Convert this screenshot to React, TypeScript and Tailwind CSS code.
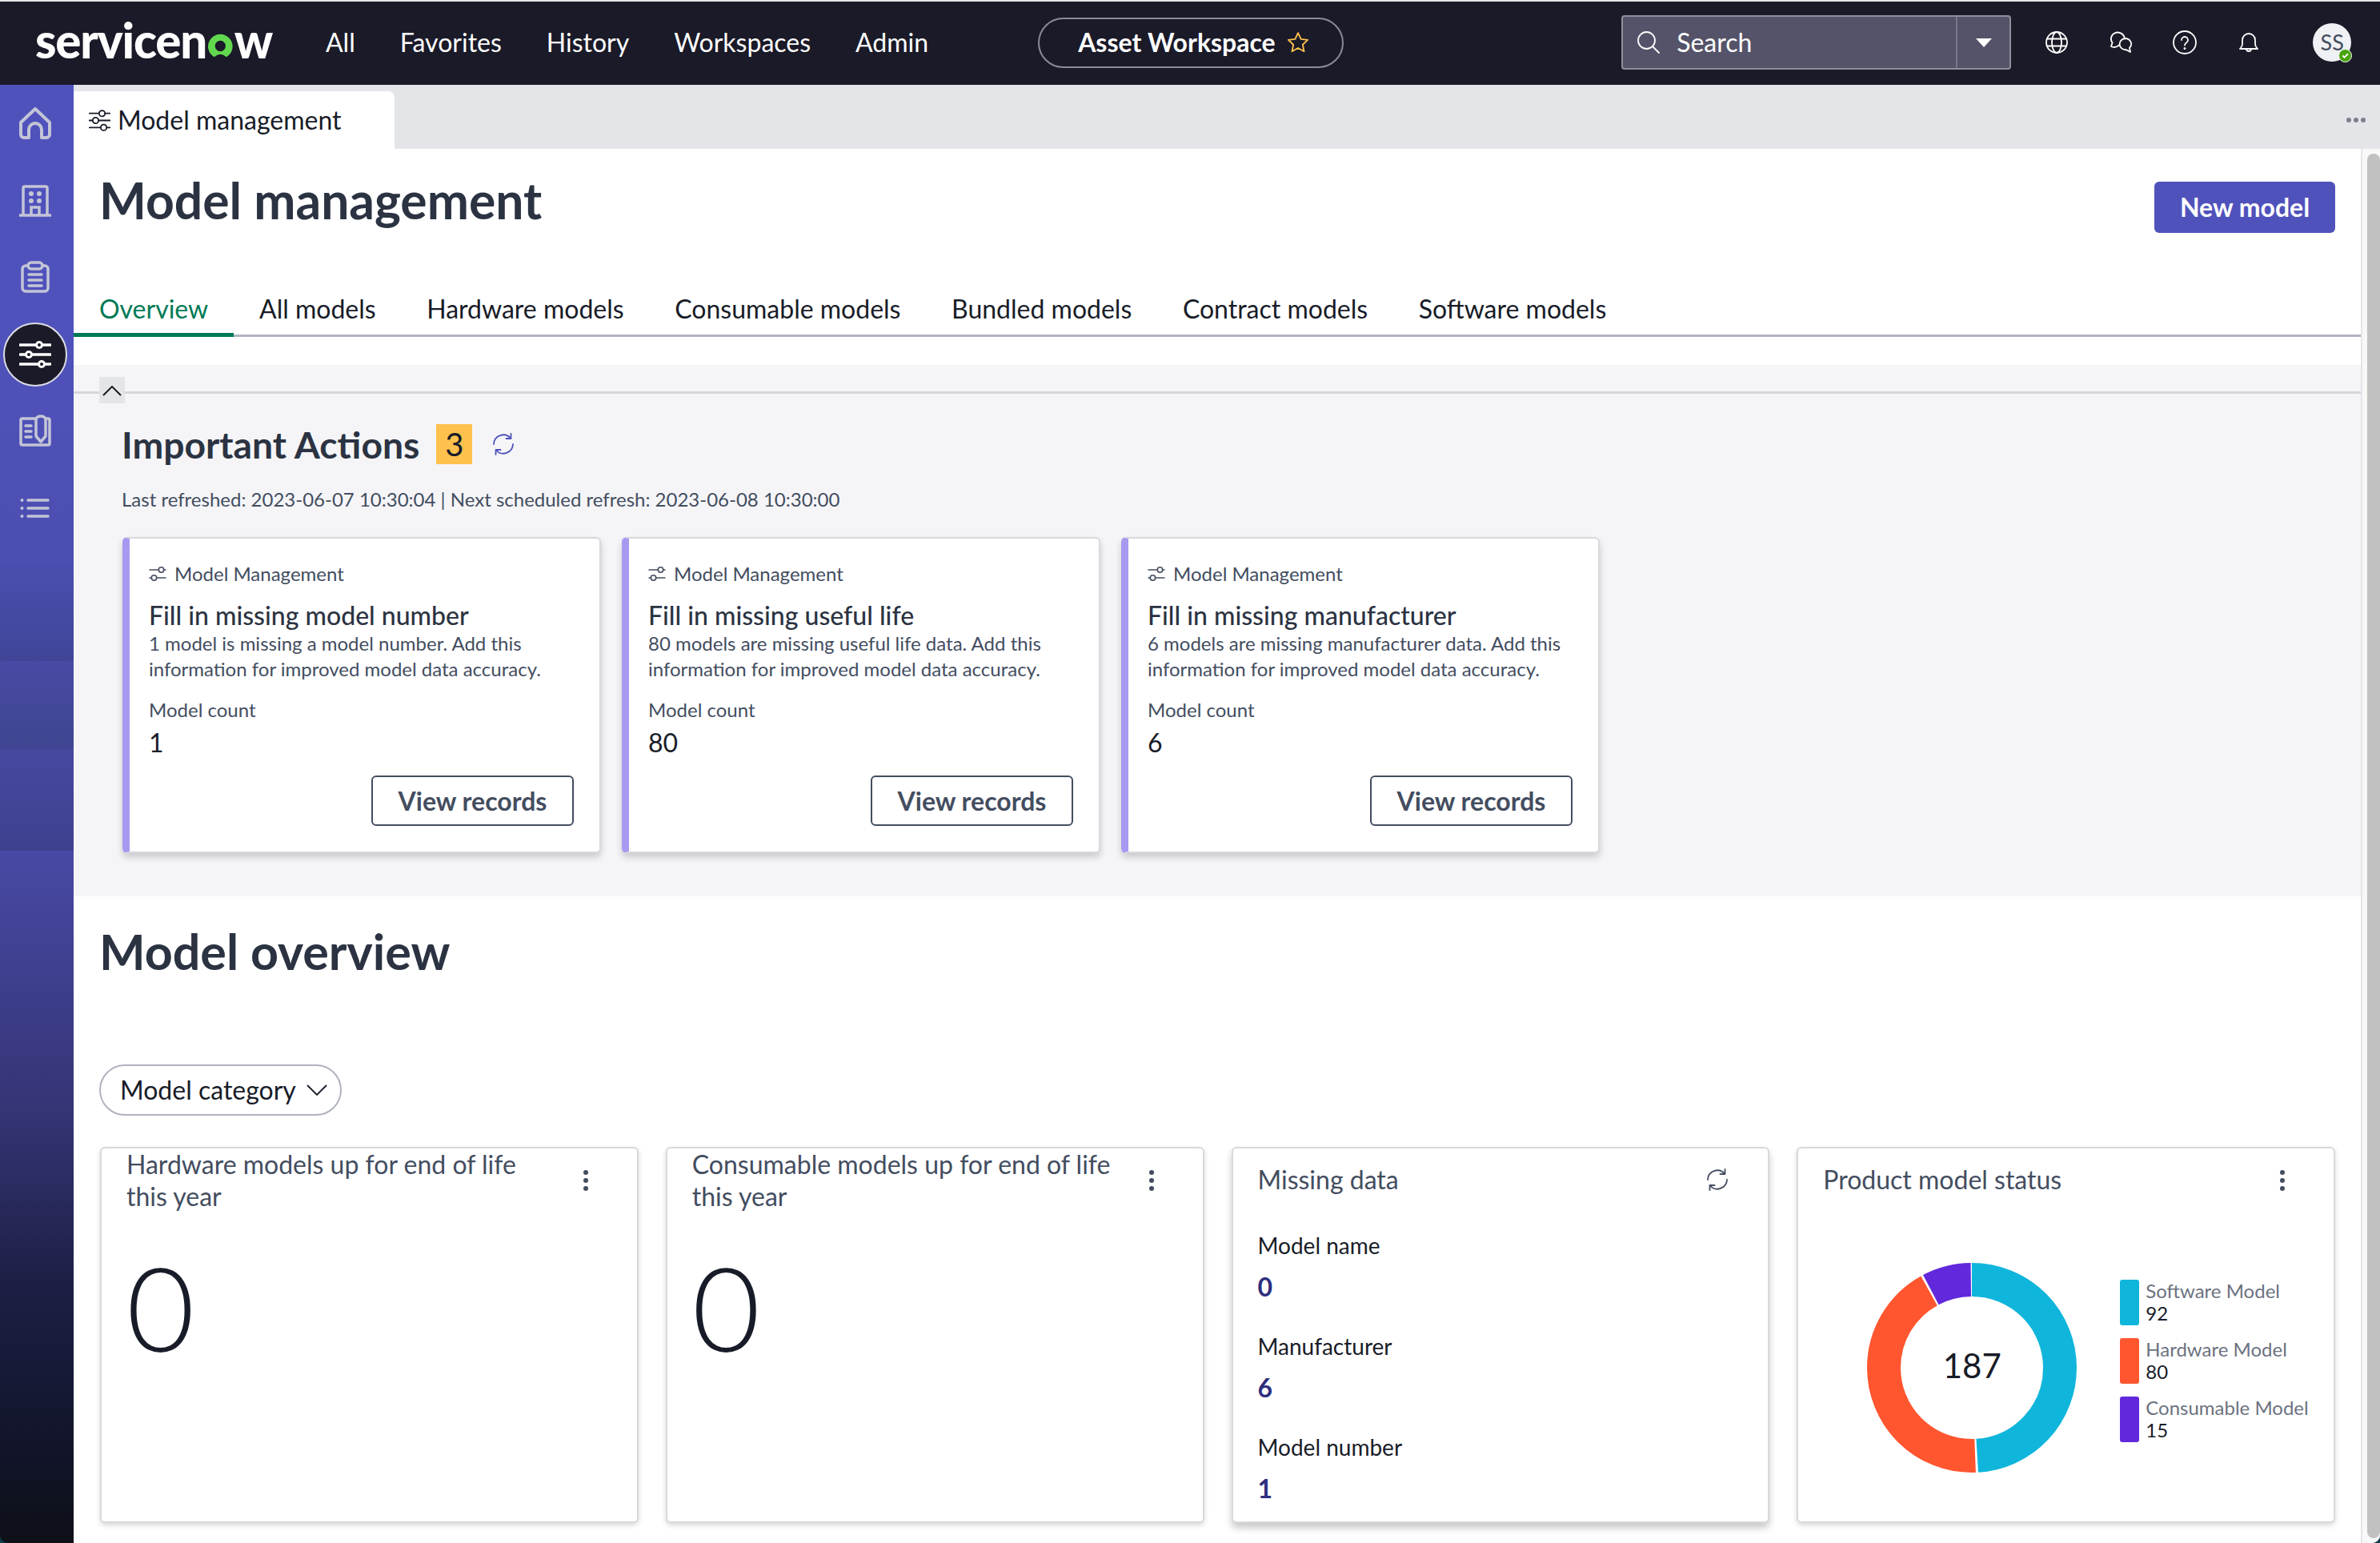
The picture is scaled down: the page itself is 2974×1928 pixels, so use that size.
import React from 'react'

const ICON_GREY = '#c3c5d6'

const TABS = ['Overview', 'All models', 'Hardware models', 'Consumable models', 'Bundled models', 'Contract models', 'Software models']

const ACTIONS = [
  { title: 'Fill in missing model number', line1: '1 model is missing a model number. Add this', count: '1' },
  { title: 'Fill in missing useful life', line1: '80 models are missing useful life data. Add this', count: '80' },
  { title: 'Fill in missing manufacturer', line1: '6 models are missing manufacturer data. Add this', count: '6' }
]

const MISSING = [
  { label: 'Model name', value: '0' },
  { label: 'Manufacturer', value: '6' },
  { label: 'Model number', value: '1' }
]

const LEGEND = [
  { label: 'Software Model', value: '92', swatch: 'bg-[#10b5db]' },
  { label: 'Hardware Model', value: '80', swatch: 'bg-[#ff5630]' },
  { label: 'Consumable Model', value: '15', swatch: 'bg-[#6228dc]' }
]

const TabSliders = () => (
  <svg width="27" height="27" viewBox="0 0 40 40" fill="none" stroke="#181c28" strokeWidth="2.6" strokeLinecap="round">
    <path d="M1 7h18M30 7h9M1 20h6M18 20h21M1 33h21M33 33h6" />
    <circle cx="24.500" cy="7" r="5.500" />
    <circle cx="12.500" cy="20" r="5.500" />
    <circle cx="27.500" cy="33" r="5.500" />
  </svg>
)

const ActiveSliders = () => (
  <svg width="40" height="40" viewBox="0 0 40 40" fill="none" stroke="white" strokeWidth="3.5" strokeLinecap="round">
    <path d="M1 8h38M1 20h38M1 32h38" />
    <g stroke="none" fill="white">
      <circle cx="25" cy="8" r="5" /><circle cx="12" cy="20" r="5" /><circle cx="28" cy="32" r="5" />
    </g>
    <g stroke="none" fill="#1a1a28">
      <circle cx="25" cy="8" r="2" /><circle cx="12" cy="20" r="2" /><circle cx="28" cy="32" r="2" />
    </g>
  </svg>
)

const HomeIcon = () => (
  <svg width="40" height="40" viewBox="0 0 40 40" fill="none" stroke={ICON_GREY} strokeWidth="4" strokeLinejoin="round">
    <path d="M2 19 L20 2 L38 19 V34 a4 4 0 0 1-4 4 H28 V28 a8 8 0 0 0-16 0 V38 H6 a4 4 0 0 1-4-4 Z" />
  </svg>
)

const BuildingIcon = () => (
  <svg width="40" height="40" viewBox="0 0 40 40" fill="none" stroke={ICON_GREY} strokeWidth="3.5" strokeLinecap="round">
    <path d="M0 38h40M5 38V4a2 2 0 0 1 2-2h26a2 2 0 0 1 2 2v34M15 38V28h10v10" />
    <g fill={ICON_GREY} stroke="none">
      <circle cx="15" cy="11" r="3" /><circle cx="25" cy="11" r="3" />
      <circle cx="15" cy="20" r="3" /><circle cx="25" cy="20" r="3" />
    </g>
  </svg>
)

const ClipboardIcon = () => (
  <svg width="40" height="40" viewBox="0 0 40 40" fill="none" stroke={ICON_GREY} strokeWidth="3.5" strokeLinecap="round">
    <path d="M11 6H8a4 4 0 0 0-4 4v24a4 4 0 0 0 4 4h24a4 4 0 0 0 4-4V10a4 4 0 0 0-4-4h-3" />
    <rect x="11" y="2" width="18" height="8" rx="4" />
    <path d="M12 17h16M12 24h16M12 31h16" strokeWidth="3.5" />
  </svg>
)

const NoteIcon = () => (
  <svg width="40" height="40" viewBox="0 0 40 40" fill="none" stroke={ICON_GREY} strokeWidth="3.5" strokeLinecap="round" strokeLinejoin="round">
    <path d="M21 5H4a2 2 0 0 0-2 2v29a2 2 0 0 0 2 2h32a2 2 0 0 0 2-2V7a2 2 0 0 0-2-2h-3" />
    <path d="M21 6a6 4 0 0 1 12 0v21l-6 7-6-7Z" />
    <path d="M8 14h7M8 21h7M8 28h7" />
  </svg>
)

const ListIcon = () => (
  <svg width="40" height="40" viewBox="0 0 40 40" fill="none" stroke={ICON_GREY} strokeWidth="3.5" strokeLinecap="round">
    <path d="M11 10h25M11 20h25M11 30h25" />
    <g fill={ICON_GREY} stroke="none">
      <circle cx="3.500" cy="10" r="2" /><circle cx="3.500" cy="20" r="2" /><circle cx="3.500" cy="30" r="2" />
    </g>
  </svg>
)

const RefreshIcon: React.FC<{ color: string; size?: number }> = ({ color, size = 30 }) => (
  <svg width={size} height={size} viewBox="0 0 30 30" fill="none" stroke={color} strokeWidth="1.8" strokeLinecap="round" strokeLinejoin="round">
    <path d="M3 15A12 12 0 0 1 24 7.500M27 15A12 12 0 0 1 6 22.500" />
    <path d="M24.500 2v6h-6M5.500 28v-6h6" />
  </svg>
)

const Kebab = () => (
  <div className="flex flex-col gap-[4px] items-center">
    <span className="w-[6px] h-[6px] rounded-full bg-[#434d5f]" />
    <span className="w-[6px] h-[6px] rounded-full bg-[#434d5f]" />
    <span className="w-[6px] h-[6px] rounded-full bg-[#434d5f]" />
  </div>
)

const Logo = () => (
  <div className="flex items-baseline text-white font-black text-[60px] leading-[60px] tracking-[-1.2px] w-[296px]">
    <span>servicen</span>
    <svg width="33" height="31" viewBox="0 0 32 30" className="mx-[1px]">
      <path
        fillRule="evenodd"
        fill="#62d84e"
        d="M8.500 28.500A15 15 0 1 1 23.500 28.500Q16 21.500 8.500 28.500ZM16 8.500a6.500 6.500 0 1 0 0 13a6.500 6.500 0 1 0 0-13Z"
      />
    </svg>
    <span>w</span>
  </div>
)

const Header = () => (
  <div className="h-[106px] border-t-2 border-[#e4e5e9] bg-[#1a1a28] flex items-center text-white pb-[2px]">
    <div className="ml-[44px] mr-[67px] mb-[6px]"><Logo /></div>
    <nav className="flex gap-[56px] text-[32px] leading-[40px]">
      <span>All</span><span>Favorites</span><span>History</span><span>Workspaces</span><span>Admin</span>
    </nav>
    <div className="ml-[137px] w-[382px] h-[63px] rounded-full border-2 border-[#8a8a98] flex items-center pl-[48px] gap-[13px]">
      <span className="text-[32px] font-bold leading-[40px]">Asset Workspace</span>
      <svg width="30" height="30" viewBox="0 0 24 24" fill="none" stroke="#ffc14d" strokeWidth="1.5" strokeLinejoin="round">
        <path d="M12 2.500l2.900 6.200 6.800.8-5 4.700 1.300 6.800-6-3.400-6 3.400 1.300-6.800-5-4.700 6.800-.8Z" />
      </svg>
    </div>
    <div className="ml-[347px] w-[487px] h-[68px] rounded-[4px] border-2 border-[#8f8f9c] bg-[#555369] flex items-center">
      <div className="flex-1 h-full flex items-center pl-[17px] gap-[20px] border-r-2 border-[#77768a]">
        <svg width="30" height="30" viewBox="0 0 30 30" fill="none" stroke="white" strokeWidth="1.8" strokeLinecap="round">
          <circle cx="12.500" cy="12.500" r="10.500" /><path d="M20 20l8 8" />
        </svg>
        <span className="text-[32px] leading-[40px]">Search</span>
      </div>
      <div className="w-[65px] flex justify-center">
        <span className="w-0 h-0 border-l-[10px] border-r-[10px] border-t-[11px] border-l-transparent border-r-transparent border-t-white" />
      </div>
    </div>
    <div className="ml-[42px] flex items-center gap-[50px]">
      <svg width="30" height="30" viewBox="0 0 30 30" fill="none" stroke="white" strokeWidth="1.8">
        <circle cx="15" cy="15" r="13" /><ellipse cx="15" cy="15" rx="6" ry="13" /><path d="M2 10.500h26M2 19.500h26" />
      </svg>
      <svg width="30" height="30" viewBox="0 0 30 30" fill="none" stroke="white" strokeWidth="1.8" strokeLinejoin="round">
        <path d="M3 20l1.600-4.600A8.500 8 0 1 1 13 18.400 9 9 0 0 1 3 20Z" />
        <path d="M20.500 10a7.500 7 0 0 1 5.500 11.800l1 5.200-5-2.800A7.500 7 0 0 1 20.500 10Z" fill="#1a1a28" />
      </svg>
      <svg width="30" height="30" viewBox="0 0 30 30" fill="none" stroke="white" strokeWidth="1.8" strokeLinecap="round">
        <circle cx="15" cy="15" r="14" /><path d="M11 12a4 4 0 1 1 6 3.500c-1.400.8-2 1.500-2 3" /><circle cx="15" cy="22.500" r=".6" />
      </svg>
      <svg width="30" height="30" viewBox="0 0 30 30" fill="none" stroke="white" strokeWidth="1.8" strokeLinejoin="round">
        <path d="M4 23c2-2 3-3.500 3-6v-5a8 8 0 0 1 16 0v5c0 2.500 1 4 3 6Z" /><path d="M12 23a3 3 0 0 0 6 0" />
      </svg>
    </div>
    <div className="relative ml-[65px] w-[48px] h-[48px] rounded-full bg-[#f0f1f4] flex items-center justify-center text-[#434d5f] text-[27px] leading-[30px]">
      SS
      <span className="absolute right-[-1px] bottom-[-1px] w-[17px] h-[17px] rounded-full bg-[#48a30e] border border-white flex items-center justify-center">
        <svg width="9" height="9" viewBox="0 0 10 10" fill="none" stroke="white" strokeWidth="2"><path d="M1.500 5l2.500 2.500 5-5" /></svg>
      </span>
    </div>
  </div>
)

const Sidebar = () => (
  <div className="w-[92px] shrink-0 rounded-bl-[10px] bg-[linear-gradient(180deg,#5052bc_0px,#5052bc_300px,#4c4eb0_594px,#404598_720px,#484aa4_720px,#3f4590_830px,#4648a0_830px,#3e418f_957px,#4849a4_957px,#333473_1294px,#1d1f45_1494px,#12152b_1694px,#0d1017_1822px)] flex flex-col items-center pt-[28px] pr-[4px]">
    <HomeIcon />
    <div className="mt-[57px]"><BuildingIcon /></div>
    <div className="mt-[55px]"><ClipboardIcon /></div>
    <div className="mt-[37px] w-[80px] h-[80px] rounded-full bg-[#1a1a28] border-2 border-[#dcdde3] flex items-center justify-center">
      <ActiveSliders />
    </div>
    <div className="mt-[35px]"><NoteIcon /></div>
    <div className="mt-[57px]"><ListIcon /></div>
  </div>
)

const ActionCard: React.FC<{ title: string; line1: string; count: string }> = ({ title, line1, count }) => (
  <div className="w-[598px] h-[395px] rounded-[6px] bg-white border-2 border-[#d8d9de] border-l-[9px] border-l-[#a899f0] shadow-[0_5px_8px_rgba(0,0,0,0.18)] pl-[24px] pr-[32px] pt-[28px] flex flex-col">
    <div className="flex items-center gap-[10px] text-[24px] leading-[32px] text-[#434d5f]">
      <svg width="22" height="22" viewBox="0 0 22 22" fill="none" stroke="#434d5f" strokeWidth="1.6" strokeLinecap="round">
        <path d="M1 6h11M19 6h2M1 16h2M10 16h11" /><circle cx="15.500" cy="6" r="3.200" /><circle cx="6.500" cy="16" r="3.200" />
      </svg>
      Model Management
    </div>
    <div className="mt-[17px] text-[32px] leading-[38px] font-medium text-[#2b3342]">{title}</div>
    <div className="text-[24px] leading-[32px] text-[#434d5f] whitespace-nowrap">{line1}</div>
    <div className="text-[24px] leading-[32px] text-[#434d5f] whitespace-nowrap">information for improved model data accuracy.</div>
    <div className="mt-[19px] text-[24px] leading-[32px] text-[#434d5f]">Model count</div>
    <div className="mt-[5px] text-[32px] leading-[40px] text-[#181c28]">{count}</div>
    <div className="mt-[21px] self-end w-[253px] h-[63px] rounded-[6px] border-2 border-[#434d5f] flex items-center justify-center text-[32px] font-bold text-[#434d5f]">
      View records
    </div>
  </div>
)

const ZeroCard: React.FC<{ title: string }> = ({ title }) => (
  <div className="h-[470px] rounded-[6px] bg-white border-2 border-[#d8d9de] shadow-[0_3px_6px_rgba(0,0,0,0.15)] pl-[31px] pr-[30px]">
    <div className="flex justify-between">
      <div className="w-[540px] text-[32px] leading-[40px] text-[#434d5f]">
        {title}<br />this year
      </div>
      <div className="mt-[27px] mr-[31px]"><Kebab /></div>
    </div>
    <div className="mt-[44px] text-[147px] leading-[147px] font-light text-[#181c28]">0</div>
  </div>
)

const Donut = () => (
  <svg width="262" height="262" viewBox="0 0 262 262" fill="none" strokeWidth="42">
    <g transform="rotate(-90 131 131)">
      <circle cx="131" cy="131" r="110" stroke="#ffffff" strokeWidth="42" />
      <circle cx="131" cy="131" r="110" stroke="#10b5db" strokeDasharray="338.400 691.200" strokeDashoffset="0" />
      <circle cx="131" cy="131" r="110" stroke="#ff5630" strokeDasharray="293.700 691.200" strokeDashoffset="-341" />
      <circle cx="131" cy="131" r="110" stroke="#6228dc" strokeDasharray="52 691.200" strokeDashoffset="-637.200" />
    </g>
  </svg>
)

const MissingCard = () => (
  <div className="h-[470px] rounded-[6px] bg-white border-2 border-[#d8d9de] shadow-[0_6px_10px_rgba(0,0,0,0.22)] pl-[31px] pr-[48px] pt-[19px]">
    <div className="flex justify-between items-center h-[40px] text-[32px] text-[#434d5f]">
      Missing data
      <RefreshIcon color="#434d5f" />
    </div>
    <div className="mt-[44px] flex flex-col gap-[36px]">
      {MISSING.map(m => (
        <div key={m.label}>
          <div className="text-[28px] leading-[36px] text-[#181c28]">{m.label}</div>
          <div className="mt-[14px] text-[32px] leading-[40px] font-bold text-[#2e2e7e]">{m.value}</div>
        </div>
      ))}
    </div>
  </div>
)

const StatusCard = () => (
  <div className="h-[470px] rounded-[6px] bg-white border-2 border-[#d8d9de] shadow-[0_3px_6px_rgba(0,0,0,0.15)] pl-[31px] pr-[30px] pt-[19px]">
    <div className="flex justify-between items-center h-[40px] text-[32px] text-[#434d5f]">
      Product model status
      <div className="mt-[2px] mr-[31px]"><Kebab /></div>
    </div>
    <div className="mt-[84px] ml-[55px] flex items-center">
      <div className="relative w-[262px] h-[262px]">
        <Donut />
        <div className="absolute inset-0 flex items-center justify-center text-[42px] pb-[6px] text-[#181c28]">187</div>
      </div>
      <div className="ml-[54px] mb-[18px] flex flex-col gap-[16px]">
        {LEGEND.map(l => (
          <div key={l.label} className="flex h-[57px] gap-[8px] items-stretch">
            <span className={`w-[24px] rounded-[3px] ${l.swatch}`} />
            <div className="text-[24px] leading-[28px] whitespace-nowrap">
              <div className="text-[#6b7280]">{l.label}</div>
              <div className="text-[#181c28]">{l.value}</div>
            </div>
          </div>
        ))}
      </div>
    </div>
  </div>
)

const Content = () => (
  <div className="flex-1 min-w-0 bg-white">
    <div className="flex justify-between items-start pl-[32px] pr-[32px] h-[160px]">
      <h1 className="mt-[28px] text-[62.400px] leading-[72px] font-bold text-[#2b3342]">Model management</h1>
      <button className="mt-[41px] w-[226px] h-[64px] rounded-[6px] bg-[#5052bc] text-white text-[32px] font-bold">New model</button>
    </div>
    <div className="h-[75px] flex border-b-[3px] border-[#b0b3bf]">
      {TABS.map((t, i) => (
        <div
          key={t}
          className={i === 0
            ? 'px-[32px] h-[75px] pt-[20px] text-[32px] leading-[40px] text-[#007a56] border-b-[5px] border-[#007a56]'
            : 'px-[31.8px] h-[72px] pt-[20px] text-[32px] leading-[40px] text-[#181c28]'}
        >
          {t}
        </div>
      ))}
    </div>
    <div className="mt-[35px] bg-[#f5f5f8] h-[664px] pt-[15px]">
      <div className="flex items-start h-[33px]">
        <div className="mt-[18px] w-[32px] h-[3px] bg-[#d5d6dc]" />
        <div className="w-[32px] h-[33px] bg-[#e4e5e9] flex items-center justify-center">
          <svg width="24" height="14" viewBox="0 0 24 14" fill="none" stroke="#111" strokeWidth="1.8"><path d="M1 13L12 2l11 11" /></svg>
        </div>
        <div className="mt-[18px] flex-1 h-[3px] bg-[#d5d6dc]" />
      </div>
      <div className="pl-[61px]">
        <div className="mt-[26px] -ml-[1px] flex items-center h-[50px]">
          <h2 className="text-[46.300px] leading-[50px] font-bold text-[#2b3342]">Important Actions</h2>
          <span className="ml-[21px] w-[45px] h-[50px] bg-[#ffc14d] flex items-center justify-center text-[40px] text-[#181c28]">3</span>
          <div className="ml-[24px]"><RefreshIcon color="#5052bc" /></div>
        </div>
        <div className="mt-[28px] -ml-[1px] text-[24px] leading-[32px] text-[#434d5f]">
          Last refreshed: 2023-06-07 10:30:04 | Next scheduled refresh: 2023-06-08 10:30:00
        </div>
        <div className="mt-[31px] flex gap-[26px]">
          {ACTIONS.map(a => <ActionCard key={a.title} {...a} />)}
        </div>
      </div>
    </div>
    <div className="pl-[33px] pr-[32px]">
      <h2 className="mt-[33px] -ml-[1px] text-[61px] leading-[72px] font-bold text-[#2b3342]">Model overview</h2>
      <div className="mt-[105px] -ml-[1px] w-[303px] h-[64px] rounded-full border-2 border-[#b0b3bf] flex items-center pl-[24px] gap-[13px] text-[32px] text-[#181c28]">
        Model category
        <svg width="26" height="16" viewBox="0 0 26 16" fill="none" stroke="#181c28" strokeWidth="1.8"><path d="M1 2l12 12L25 2" /></svg>
      </div>
      <div className="mt-[39px] grid grid-cols-4 gap-[34px]">
        <ZeroCard title="Hardware models up for end of life" />
        <ZeroCard title="Consumable models up for end of life" />
        <MissingCard />
        <StatusCard />
      </div>
    </div>
  </div>
)

export default function App() {
  return (
    <div className="w-[2974px] h-[1928px] overflow-hidden flex flex-col bg-[#123a4a] font-['Lato',sans-serif]">
      <Header />
      <div className="flex-1 flex min-h-0">
        <Sidebar />
        <div className="flex-1 min-w-0 flex flex-col rounded-br-[10px] overflow-hidden bg-white">
          <div className="h-[80px] shrink-0 bg-[#e4e5e9] pt-[8px] flex justify-between">
            <div className="w-[401px] h-[72px] bg-white rounded-tr-[8px] flex items-center pl-[19px] gap-[9px] text-[32px] text-[#181c28]">
              <TabSliders />
              Model management
            </div>
            <div className="flex gap-[3px] items-center h-[72px] pr-[18px]">
              <span className="w-[6px] h-[6px] rounded-full bg-[#7b7f8c]" />
              <span className="w-[6px] h-[6px] rounded-full bg-[#7b7f8c]" />
              <span className="w-[6px] h-[6px] rounded-full bg-[#7b7f8c]" />
            </div>
          </div>
          <div className="flex-1 flex min-h-0">
            <Content />
            <div className="w-[24px] shrink-0 bg-[#f8f8f8] border-l-2 border-[#e4e5e9] pt-[6px] pl-[6px] pb-[6px]">
              <div className="h-full rounded-full bg-[#c1c1c1]" />
            </div>
          </div>
        </div>
      </div>
    </div>
  )
}
